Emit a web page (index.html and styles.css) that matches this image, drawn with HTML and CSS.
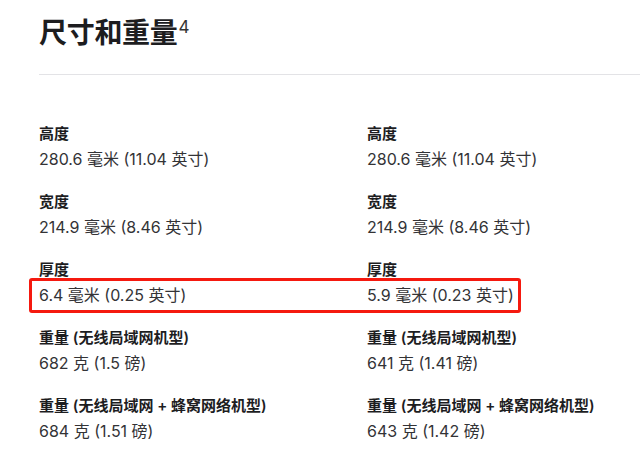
FILE: index.html
```html
<!DOCTYPE html>
<html lang="zh-CN">
<head>
<meta charset="utf-8">
<title>尺寸和重量</title>
<link rel="stylesheet" href="styles.css">
</head>
<body>
<main class="page">
  <h2 class="title">尺寸和重量<sup class="footnote">4</sup></h2>
  <section class="specs">
    <div class="col">
      <div class="spec"><div class="label">高度</div><div class="value">280.6 毫米 (11.04 英寸)</div></div>
      <div class="spec"><div class="label">宽度</div><div class="value">214.9 毫米 (8.46 英寸)</div></div>
      <div class="spec"><div class="label">厚度</div><div class="value">6.4 毫米 (0.25 英寸)</div></div>
      <div class="spec"><div class="label">重量 (无线局域网机型)</div><div class="value">682 克 (1.5 磅)</div></div>
      <div class="spec"><div class="label">重量 (无线局域网 + 蜂窝网络机型)</div><div class="value">684 克 (1.51 磅)</div></div>
    </div>
    <div class="col">
      <div class="spec"><div class="label">高度</div><div class="value">280.6 毫米 (11.04 英寸)</div></div>
      <div class="spec"><div class="label">宽度</div><div class="value">214.9 毫米 (8.46 英寸)</div></div>
      <div class="spec"><div class="label">厚度</div><div class="value">5.9 毫米 (0.23 英寸)</div></div>
      <div class="spec"><div class="label">重量 (无线局域网机型)</div><div class="value">641 克 (1.41 磅)</div></div>
      <div class="spec"><div class="label">重量 (无线局域网 + 蜂窝网络机型)</div><div class="value">643 克 (1.42 磅)</div></div>
    </div>
    <div class="highlight"></div>
  </section>
</main>
</body>
</html>
```
FILE: styles.css
```css
html, body {
  margin: 0;
  padding: 0;
  background: #fff;
  overflow: hidden;
}
body {
  font-family: "Inter", "Noto Sans CJK SC", sans-serif;
  color: #1d1d1f;
}
.page {
  padding-left: 39px;
  width: 601px;
}
.title {
  margin: 17px 0 0 0;
  font-size: 28px;
  line-height: 32px;
  font-weight: 600;
  padding-bottom: 25px;
  border-bottom: 1px solid #e3e3e6;
  letter-spacing: -0.3px;
}
.footnote {
  font-size: 17px;
  font-weight: 400;
  color: #333;
  vertical-align: top;
  line-height: 20px;
  margin-left: 1px;
}
.specs {
  position: relative;
  display: grid;
  grid-template-columns: 328px 273px;
  padding-top: 49px;
}
.col {
  display: flex;
  flex-direction: column;
  gap: 21px;
}
.spec {
  display: flex;
  flex-direction: column;
}
.label {
  font-size: 15px;
  line-height: 20px;
  font-weight: 600;
  color: #1d1d1f;
}
.value {
  padding-top: 3px;
  font-size: 16px;
  line-height: 24px;
  font-weight: 400;
  color: #333336;
}
.highlight {
  position: absolute;
  left: -10px;
  top: 203px;
  width: 486px;
  height: 29px;
  border: 3px solid #f5190f;
  border-radius: 3px;
}
```
